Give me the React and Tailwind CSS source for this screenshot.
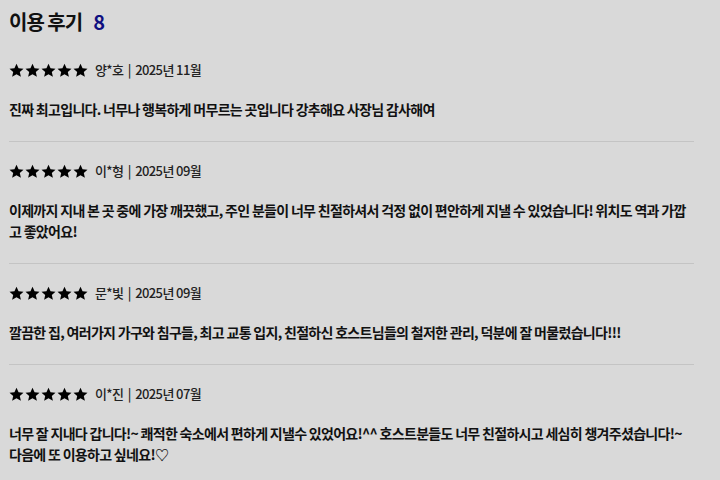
import React from 'react';

const reviews = [
    {
        name: '양*호',
        date: '2025년 11월',
        text: '진짜 최고입니다. 너무나 행복하게 머무르는 곳입니다 강추해요 사장님 감사해여',
    },
    {
        name: '이*형',
        date: '2025년 09월',
        text: '이제까지 지내 본 곳 중에 가장 깨끗했고, 주인 분들이 너무 친절하셔서 걱정 없이 편안하게 지낼 수 있었습니다! 위치도 역과 가깝고 좋았어요!',
    },
    {
        name: '문*빛',
        date: '2025년 09월',
        text: '깔끔한 집, 여러가지 가구와 침구들, 최고 교통 입지, 친절하신 호스트님들의 철저한 관리, 덕분에 잘 머물렀습니다!!!',
    },
    {
        name: '이*진',
        date: '2025년 07월',
        text: '너무 잘 지내다 갑니다!~ 쾌적한 숙소에서 편하게 지낼수 있었어요!^^ 호스트분들도 너무 친절하시고 세심히 챙겨주셨습니다!~ 다음에 또 이용하고 싶네요!♡',
    },
];

const Star = () => (
    <svg width="15" height="15" viewBox="0 0 24 24" className="fill-black">
        <path d="M12 1l3.3 7.2 7.9.8-5.9 5.3 1.7 7.8L12 18.1l-7 4 1.7-7.8L.8 9l7.9-.8z" />
    </svg>
);

const Review = ({ name, date, text }) => (
    <div className="pt-[21px] pb-[21px] border-b border-[#c4c4c4]">
        <div className="flex items-center h-4">
            <div className="flex gap-[1px]">
                <Star /><Star /><Star /><Star /><Star />
            </div>
            <span className="ml-[7px] text-[13px] font-medium text-[#222] tracking-[-0.6px]">
                {name} <span className="mx-[2px]">|</span> {date}
            </span>
        </div>
        <p className="mt-[21px] text-[14px] leading-[21px] font-semibold text-[#111] tracking-[-0.7px]">
            {text}
        </p>
    </div>
);

export default function App() {
    return (
        <div
            className="min-h-[480px] w-full bg-[#d9d9d9] pl-[9px] pr-[26px]"
            style={{ fontFamily: '"Noto Sans CJK KR", "Noto Sans", sans-serif' }}
        >
            <div className="w-[685px]">
                <h2 className="pt-[8px] h-[36px] flex items-center gap-[11px] text-[20px] font-bold text-[#111] tracking-[-1px]">
                    <span>이용 후기</span>
                    <span className="text-[#0f0f80]">8</span>
                </h2>
                <div className="mt-[5px]">
                    {reviews.map((r, i) => (
                        <Review key={i} {...r} />
                    ))}
                </div>
            </div>
        </div>
    );
}
